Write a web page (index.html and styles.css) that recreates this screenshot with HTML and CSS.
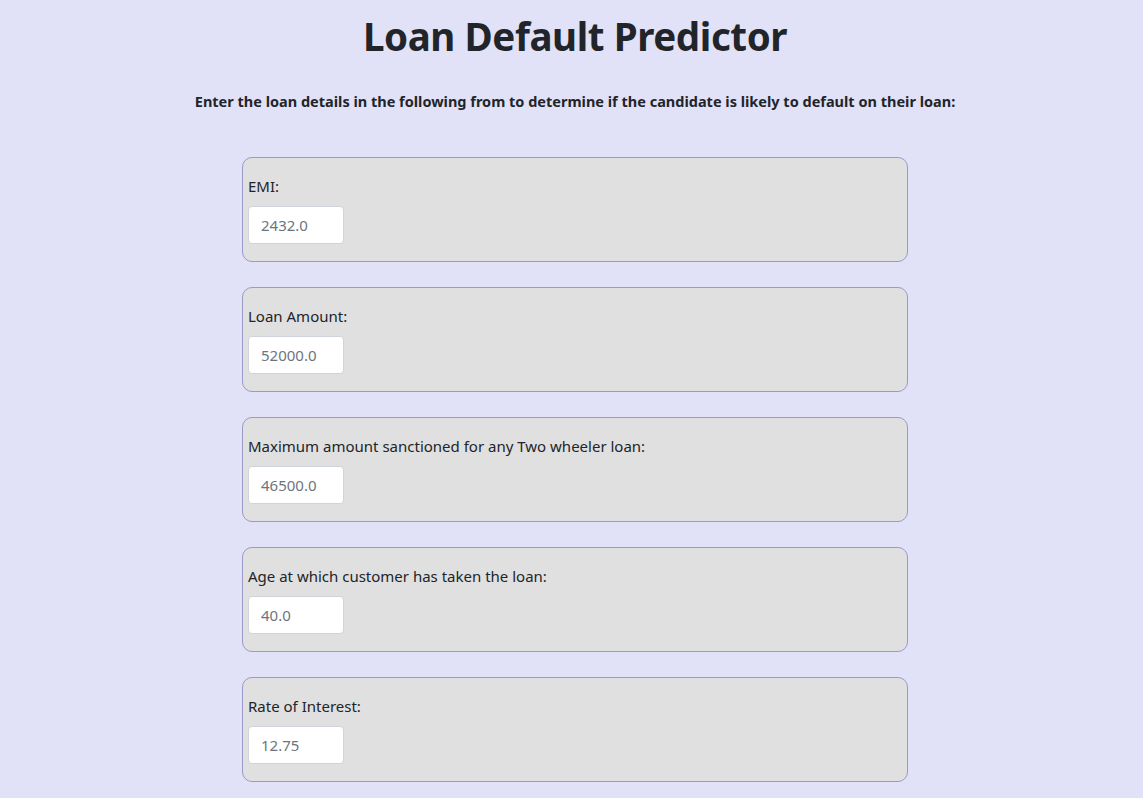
FILE: index.html
```html
<!DOCTYPE html>
<html lang="en">
<head>
<meta charset="utf-8">
<title>Loan Default Predictor</title>
<link rel="stylesheet" href="styles.css">
</head>
<body>
<main class="page">
  <h1 class="title">Loan Default Predictor</h1>
  <p class="intro">Enter the loan details in the following from to determine if the candidate is likely to default on their loan:</p>
  <form class="form">
    <div class="field">
      <label class="label" for="emi">EMI:</label>
      <input class="input" id="emi" type="text" placeholder="2432.0">
    </div>
    <div class="field">
      <label class="label" for="amount">Loan Amount:</label>
      <input class="input" id="amount" type="text" placeholder="52000.0">
    </div>
    <div class="field">
      <label class="label" for="max">Maximum amount sanctioned for any Two wheeler loan:</label>
      <input class="input" id="max" type="text" placeholder="46500.0">
    </div>
    <div class="field">
      <label class="label" for="age">Age at which customer has taken the loan:</label>
      <input class="input" id="age" type="text" placeholder="40.0">
    </div>
    <div class="field">
      <label class="label" for="rate">Rate of Interest:</label>
      <input class="input" id="rate" type="text" placeholder="12.75">
    </div>
  </form>
</main>
</body>
</html>
```
FILE: styles.css
```css
* { box-sizing: border-box; }
html, body { margin: 0; padding: 0; }
body {
  background: #e1e1f7;
  color: #212529;
  font-family: "Noto Sans", "Open Sans", sans-serif;
  font-size: 15px;
  line-height: 1.5;
}
.page {
  padding: 13px 0 0 7px;
  display: flex;
  flex-direction: column;
  align-items: center;
}
.title {
  margin: 0;
  font-size: 38.5px;
  letter-spacing: -0.4px;
  font-weight: 700;
  line-height: 1.2;
}
.intro {
  margin: 32px 0 0;
  font-size: 14.5px;
  font-weight: 700;
}
.form {
  margin-top: 44px;
  width: 666px;
  display: flex;
  flex-direction: column;
  gap: 25px;
}
.field {
  height: 105px;
  background: #e0e0e0;
  border: 1px solid #9a9ac8;
  border-radius: 10px;
  padding: 16px 5px 17px;
  display: flex;
  flex-direction: column;
  align-items: flex-start;
}
.label {
  line-height: 24px;
  margin-bottom: 8px;
}
.input {
  width: 96px;
  height: 38px;
  padding: 6px 12px;
  border: 1px solid #ced4da;
  border-radius: 4px;
  background: #fff;
  font: inherit;
  color: #495057;
}
.input::placeholder { color: #6c757d; opacity: 1; }
```
